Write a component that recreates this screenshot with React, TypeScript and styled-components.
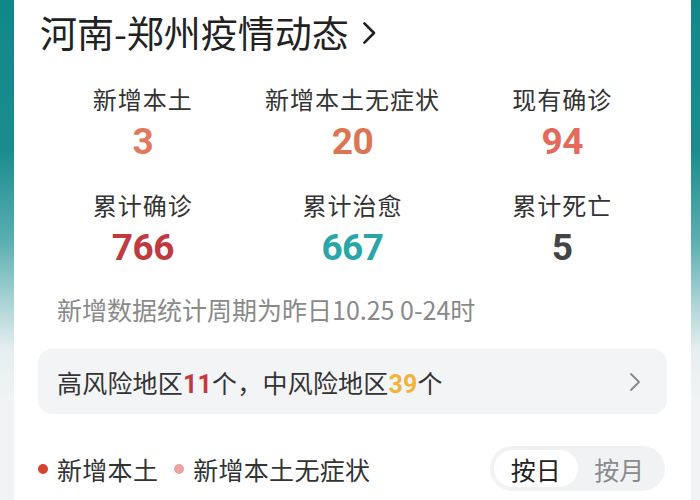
import React from "react";
import styled, { createGlobalStyle } from "styled-components";

const Global = createGlobalStyle`
  html, body { margin: 0; padding: 0; }
  body {
    width: 700px;
    height: 500px;
    overflow: hidden;
    font-family: "Noto Sans CJK SC", "Noto Sans", sans-serif;
    background: linear-gradient(
      to bottom,
      #12878a 0%,
      #1a8c8e 30%,
      #5aaeb0 48%,
      #b4d8d9 62%,
      #e6eeef 70%,
      #f1f3f4 80%,
      #f2f3f5 100%
    );
  }
`;

const Card = styled.div`
  margin-left: 14px;
  width: 677px;
  height: 500px;
  box-sizing: border-box;
  background: #ffffff;
  padding: 11px 24px 0 24px;
  display: flex;
  flex-direction: column;
`;

const Title = styled.div`
  display: flex;
  align-items: center;
  gap: 13px;
  padding-left: 2px;
  font-size: 37px;
  line-height: 43px;
  color: #222222;
  font-weight: 400;
`;

const StatsGrid = styled.div`
  margin-top: 30px;
  display: grid;
  grid-template-columns: repeat(3, 1fr);
  row-gap: 20px;
`;

const Stat = styled.div`
  display: flex;
  flex-direction: column;
  align-items: center;
`;

const StatLabel = styled.div`
  font-size: 24px;
  line-height: 30px;
  color: #333333;
  letter-spacing: 1px;
`;

const StatValue = styled.div<{ $color: string }>`
  font-family: Roboto, "Liberation Sans", sans-serif;
  font-weight: 700;
  font-size: 37px;
  line-height: 56px;
  color: ${(p) => p.$color};
  letter-spacing: -0.5px;
`;

const Note = styled.div`
  margin-top: 17px;
  padding-left: 19px;
  font-size: 25px;
  line-height: 32px;
  color: #8a8a8a;
`;

const RiskBox = styled.div`
  margin-top: 24px;
  height: 65px;
  border-radius: 14px;
  background: #f3f4f6;
  display: flex;
  align-items: center;
  justify-content: space-between;
  padding: 0 26px 0 19px;
  box-sizing: border-box;
  font-size: 25px;
  letter-spacing: 0.2px;
  color: #333333;
`;

const Num = styled.span<{ $color: string }>`
  font-family: Roboto, "Liberation Sans", sans-serif;
  font-weight: 700;
  color: ${(p) => p.$color};
`;

const BottomRow = styled.div`
  margin-top: 32px;
  display: flex;
  align-items: center;
  justify-content: space-between;
`;

const Legend = styled.div`
  display: flex;
  align-items: center;
  font-size: 25px;
  letter-spacing: 0.3px;
  color: #333333;
`;

const LegendItem = styled.div`
  display: flex;
  align-items: center;
  gap: 9px;
  & + & {
    margin-left: 16px;
  }
`;

const Dot = styled.span<{ $color: string }>`
  width: 10px;
  height: 10px;
  border-radius: 50%;
  background: ${(p) => p.$color};
  display: inline-block;
`;

const Toggle = styled.div`
  display: flex;
  width: 175px;
  height: 45px;
  box-sizing: border-box;
  padding: 4px;
  border-radius: 23px;
  background: #f1f2f4;
  margin-right: 2px;
`;

const ToggleItem = styled.div<{ $active?: boolean }>`
  flex: 1;
  display: flex;
  align-items: center;
  justify-content: center;
  border-radius: 19px;
  font-size: 25px;
  background: ${(p) => (p.$active ? "#ffffff" : "transparent")};
  color: ${(p) => (p.$active ? "#222222" : "#8a8a8a")};
`;

const Chevron = ({ size, color, stroke }: { size: number; color: string; stroke: number }) => (
  <svg width={size * 0.6} height={size} viewBox="0 0 12 20" fill="none">
    <path d="M2 2 L10 10 L2 18" stroke={color} strokeWidth={stroke} strokeLinecap="round" strokeLinejoin="round" />
  </svg>
);

const stats = [
  { label: "新增本土", value: "3", color: "#e4785e" },
  { label: "新增本土无症状", value: "20", color: "#de7552" },
  { label: "现有确诊", value: "94", color: "#e56a5b" },
  { label: "累计确诊", value: "766", color: "#c03a3f" },
  { label: "累计治愈", value: "667", color: "#2aa6a8" },
  { label: "累计死亡", value: "5", color: "#444444" },
];

export default function App() {
  return (
    <>
      <Global />
      <Card>
        <Title>
          <span>河南-郑州疫情动态</span>
          <Chevron size={24} color="#222" stroke={2.2} />
        </Title>
        <StatsGrid>
          {stats.map((s) => (
            <Stat key={s.label}>
              <StatLabel>{s.label}</StatLabel>
              <StatValue $color={s.color}>{s.value}</StatValue>
            </Stat>
          ))}
        </StatsGrid>
        <Note>新增数据统计周期为昨日10.25 0-24时</Note>
        <RiskBox>
          <span>
            高风险地区<Num $color="#c8363c">11</Num>个，中风险地区<Num $color="#f0b43a">39</Num>个
          </span>
          <Chevron size={20} color="#888" stroke={1.8} />
        </RiskBox>
        <BottomRow>
          <Legend>
            <LegendItem>
              <Dot $color="#d8432f" />
              <span>新增本土</span>
            </LegendItem>
            <LegendItem>
              <Dot $color="#eba2a0" />
              <span>新增本土无症状</span>
            </LegendItem>
          </Legend>
          <Toggle>
            <ToggleItem $active>按日</ToggleItem>
            <ToggleItem>按月</ToggleItem>
          </Toggle>
        </BottomRow>
      </Card>
    </>
  );
}
